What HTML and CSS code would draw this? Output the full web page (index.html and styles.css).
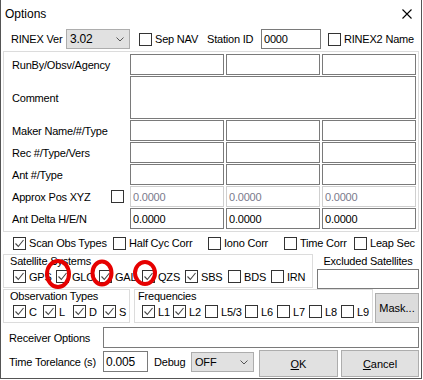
FILE: index.html
```html
<!DOCTYPE html>
<html lang="en">
<head>
  <meta charset="UTF-8">
  <title>Options</title>
  <link rel="stylesheet" href="styles.css">
</head>
<body>
  <div class="dialog">
    <div class="titlebar">
      <span class="title">Options</span>
      <svg class="close" width="10" height="10" viewBox="0 0 10 10"><path d="M0.5 0.5 L9.5 9.5 M9.5 0.5 L0.5 9.5" stroke="#000" stroke-width="1.1" fill="none"/></svg>
    </div>

    <div class="top-row">
      <span class="lbl rinex">RINEX Ver</span>
      <div class="select ver"><span>3.02</span><svg width="8" height="5" viewBox="0 0 8 5"><path d="M0.5 0.5 L4 4 L7.5 0.5" stroke="#555" fill="none"/></svg></div>
      <label class="chk sepnav"><span class="cb"></span>Sep NAV</label>
      <span class="lbl station-lbl">Station ID</span>
      <div class="field station">0000</div>
      <label class="chk rinex2"><span class="cb"></span>RINEX2 Name</label>
    </div>

    <div class="hdr-box">
      <div class="hrow">
        <span class="hlabel">RunBy/Obsv/Agency</span>
        <div class="fields"><div class="field"></div><div class="field"></div><div class="field"></div></div>
      </div>
      <div class="hrow tall">
        <span class="hlabel">Comment</span>
        <div class="field comment"></div>
      </div>
      <div class="hrow">
        <span class="hlabel">Maker Name/#/Type</span>
        <div class="fields"><div class="field"></div><div class="field"></div><div class="field"></div></div>
      </div>
      <div class="hrow">
        <span class="hlabel">Rec #/Type/Vers</span>
        <div class="fields"><div class="field"></div><div class="field"></div><div class="field"></div></div>
      </div>
      <div class="hrow">
        <span class="hlabel">Ant #/Type</span>
        <div class="fields"><div class="field"></div><div class="field"></div><div class="field"></div></div>
      </div>
      <div class="hrow">
        <span class="hlabel with-cb">Approx Pos XYZ <span class="cb"></span></span>
        <div class="fields"><div class="field off">0.0000</div><div class="field off">0.0000</div><div class="field off">0.0000</div></div>
      </div>
      <div class="hrow">
        <span class="hlabel">Ant Delta H/E/N</span>
        <div class="fields"><div class="field">0.0000</div><div class="field">0.0000</div><div class="field">0.0000</div></div>
      </div>
    </div>

    <div class="opts-row">
      <label class="chk"><span class="cb on"><svg viewBox="0 0 11 11"><path d="M1.5 5.5 L4.3 8.5 L9.5 2" stroke="#444" stroke-width="1.1" fill="none"/></svg></span>Scan Obs Types</label>
      <label class="chk"><span class="cb"></span>Half Cyc Corr</label>
      <label class="chk"><span class="cb"></span>Iono Corr</label>
      <label class="chk"><span class="cb"></span>Time Corr</label>
      <label class="chk"><span class="cb"></span>Leap Sec</label>
    </div>

    <div class="sat-row">
      <div class="group sat-box">
        <div class="group-title">Satellite Systems</div>
        <div class="checks sat-checks">
          <label class="chk"><span class="cb on"><svg viewBox="0 0 11 11"><path d="M1.5 5.5 L4.3 8.5 L9.5 2" stroke="#444" stroke-width="1.1" fill="none"/></svg></span>GPS</label>
          <label class="chk"><span class="cb on"><svg viewBox="0 0 11 11"><path d="M1.5 5.5 L4.3 8.5 L9.5 2" stroke="#444" stroke-width="1.1" fill="none"/></svg></span>GLO</label>
          <label class="chk"><span class="cb on"><svg viewBox="0 0 11 11"><path d="M1.5 5.5 L4.3 8.5 L9.5 2" stroke="#444" stroke-width="1.1" fill="none"/></svg></span>GAL</label>
          <label class="chk"><span class="cb on"><svg viewBox="0 0 11 11"><path d="M1.5 5.5 L4.3 8.5 L9.5 2" stroke="#444" stroke-width="1.1" fill="none"/></svg></span>QZS</label>
          <label class="chk"><span class="cb on"><svg viewBox="0 0 11 11"><path d="M1.5 5.5 L4.3 8.5 L9.5 2" stroke="#444" stroke-width="1.1" fill="none"/></svg></span>SBS</label>
          <label class="chk"><span class="cb"></span>BDS</label>
          <label class="chk"><span class="cb"></span>IRN</label>
        </div>
      </div>
      <div class="excl">
        <div class="excl-lbl">Excluded Satellites</div>
        <div class="field excl-field"></div>
      </div>
    </div>

    <div class="obs-row">
      <div class="group obs-box">
        <div class="group-title">Observation Types</div>
        <div class="checks obs-checks">
          <label class="chk"><span class="cb on"><svg viewBox="0 0 11 11"><path d="M1.5 5.5 L4.3 8.5 L9.5 2" stroke="#444" stroke-width="1.1" fill="none"/></svg></span>C</label>
          <label class="chk"><span class="cb on"><svg viewBox="0 0 11 11"><path d="M1.5 5.5 L4.3 8.5 L9.5 2" stroke="#444" stroke-width="1.1" fill="none"/></svg></span>L</label>
          <label class="chk"><span class="cb on"><svg viewBox="0 0 11 11"><path d="M1.5 5.5 L4.3 8.5 L9.5 2" stroke="#444" stroke-width="1.1" fill="none"/></svg></span>D</label>
          <label class="chk"><span class="cb on"><svg viewBox="0 0 11 11"><path d="M1.5 5.5 L4.3 8.5 L9.5 2" stroke="#444" stroke-width="1.1" fill="none"/></svg></span>S</label>
        </div>
      </div>
      <div class="group freq-box">
        <div class="group-title">Frequencies</div>
        <div class="checks freq-checks">
          <label class="chk"><span class="cb on"><svg viewBox="0 0 11 11"><path d="M1.5 5.5 L4.3 8.5 L9.5 2" stroke="#444" stroke-width="1.1" fill="none"/></svg></span>L1</label>
          <label class="chk"><span class="cb on"><svg viewBox="0 0 11 11"><path d="M1.5 5.5 L4.3 8.5 L9.5 2" stroke="#444" stroke-width="1.1" fill="none"/></svg></span>L2</label>
          <label class="chk"><span class="cb"></span>L5/3</label>
          <label class="chk"><span class="cb"></span>L6</label>
          <label class="chk"><span class="cb"></span>L7</label>
          <label class="chk"><span class="cb"></span>L8</label>
          <label class="chk"><span class="cb"></span>L9</label>
        </div>
      </div>
      <button class="btn mask">Mask...</button>
    </div>

    <div class="form-row receiver">
      <span class="form-lbl">Receiver Options</span>
      <div class="field recv-field"></div>
    </div>

    <div class="form-row bottom">
      <span class="form-lbl">Time Torelance (s)</span>
      <div class="field tol-field">0.005</div>
      <span class="debug-lbl">Debug</span>
      <div class="select debug"><span>OFF</span><svg width="8" height="5" viewBox="0 0 8 5"><path d="M0.5 0.5 L4 4 L7.5 0.5" stroke="#555" fill="none"/></svg></div>
      <button class="btn ok"><u>O</u>K</button>
      <button class="btn cancel"><u>C</u>ancel</button>
    </div>

    <!-- red marks drawn over the screenshot -->
    <svg class="marks" width="422" height="379" viewBox="0 0 422 379">
      <ellipse cx="58" cy="274" rx="11" ry="13" />
      <ellipse cx="102" cy="273" rx="9.5" ry="11.5" />
      <ellipse cx="145" cy="273" rx="10" ry="11" />
    </svg>
  </div>
</body>
</html>
```

FILE: styles.css
```css
* {
  margin: 0;
  padding: 0;
  box-sizing: border-box;
}

body {
  font-family: "Liberation Sans", Arial, sans-serif;
  font-size: 11px;
  letter-spacing: -0.2px;
  color: #000;
  background: #fff;
}

.dialog {
  position: relative;
  width: 422px;
  height: 379px;
  background: #fff;
  border: 1px solid #555;
  border-top: none;
}

/* title bar */
.titlebar {
  height: 27px;
  display: flex;
  align-items: center;
  justify-content: space-between;
  padding: 0 9px 0 4px;
}

.title {
  font-size: 12px;
  letter-spacing: 0;
}

.close {
  display: block;
}

/* generic controls */
.cb {
  width: 13px;
  height: 13px;
  border: 1px solid #333;
  background: #fff;
  flex-shrink: 0;
  display: flex;
}

.cb svg {
  width: 11px;
  height: 11px;
}

.chk {
  display: flex;
  align-items: center;
  gap: 3px;
  white-space: nowrap;
  height: 13px;
}

.field {
  height: 21px;
  border: 1px solid #7a7a7a;
  background: #fff;
  padding-left: 2px;
  display: flex;
  align-items: center;
  white-space: nowrap;
}

.field.off {
  border-color: #cfcfcf;
  color: #7a7a8c;
}

.select {
  height: 20px;
  background: #e1e1e1;
  border: 1px solid #adadad;
  display: flex;
  align-items: center;
  justify-content: space-between;
  padding: 0 5px 0 3px;
}

.btn {
  font: inherit;
  color: #000;
  background: #e1e1e1;
  border: 1px solid #adadad;
  display: flex;
  align-items: center;
  justify-content: center;
}

/* first row */
.top-row {
  height: 20px;
  margin-top: 2px;
  display: flex;
  align-items: center;
  padding-left: 10px;
}

.rinex {
  width: 55px;
}

.ver {
  width: 64px;
  font-size: 12px;
}

.sepnav {
  margin-left: 9px;
  width: 68px;
}

.station-lbl {
  width: 54px;
}

.station {
  width: 60px;
  height: 20px;
}

.rinex2 {
  margin-left: 7px;
}

/* header fields */
.hdr-box {
  width: 416px;
  margin: 2px 0 0 2px;
  border: 1px solid #dcdcdc;
  padding: 2px 2px 2px 0;
  display: flex;
  flex-direction: column;
  gap: 1px;
}

.hrow {
  display: flex;
  height: 21px;
}

.hrow.tall {
  height: 43px;
}

.hlabel {
  width: 126px;
  padding-left: 8px;
  display: flex;
  align-items: center;
}

.hlabel.with-cb {
  justify-content: space-between;
  padding-right: 6px;
}

.fields {
  display: flex;
  gap: 2px;
}

.fields .field {
  width: 94px;
}

.comment {
  width: 286px;
  height: 43px;
}

/* option checkboxes */
.opts-row {
  height: 22px;
  display: grid;
  grid-template-columns: 100px 95px 76px 70px auto;
  align-items: center;
  padding-left: 12px;
}

/* group boxes */
.group {
  border: 1px solid #dcdcdc;
  height: 34px;
  padding-bottom: 4px;
}

.group-title {
  height: 13px;
  line-height: 13px;
  padding-left: 6px;
}

.checks {
  display: grid;
  margin-top: 2px;
  padding-left: 9px;
}

.sat-row {
  display: flex;
  padding-left: 2px;
}

.sat-box {
  width: 310px;
}

.sat-checks {
  grid-template-columns: repeat(7, 43px);
}

.excl {
  margin-left: 4px;
  width: 102px;
}

.excl-lbl {
  height: 15px;
  line-height: 15px;
  text-align: center;
}

.excl-field {
  height: 20px;
}

.obs-row {
  display: flex;
  align-items: flex-start;
  padding-left: 2px;
}

.obs-box {
  width: 127px;
}

.obs-checks {
  grid-template-columns: repeat(4, 30px);
}

.freq-box {
  margin-left: 4px;
  width: 239px;
}

.freq-box .group-title {
  padding-left: 3px;
}

.freq-checks {
  padding-left: 7px;
  grid-template-columns: 31px 32px 40px 32px 32px 32px auto;
}

.mask {
  margin: 4px 0 0 2px;
  width: 44px;
  height: 30px;
  background: #dcdcdc;
}

/* bottom rows */
.form-row {
  display: flex;
  align-items: flex-start;
  padding-left: 8px;
}

.receiver {
  margin-top: 4px;
  align-items: center;
}

.form-lbl {
  width: 94px;
  height: 21px;
  display: flex;
  align-items: center;
}

.bottom .form-lbl {
  margin-top: 1px;
}

.recv-field {
  width: 316px;
}

.bottom {
  margin-top: 2px;
}

.tol-field {
  width: 45px;
  margin-top: 1px;
  font-size: 12px;
}

.debug-lbl {
  margin: 1px 0 0 6px;
  width: 37px;
  height: 21px;
  display: flex;
  align-items: center;
}

.debug {
  margin-top: 2px;
  width: 63px;
}

.ok {
  margin-left: 5px;
  width: 79px;
  height: 27px;
}

.cancel {
  margin-left: 3px;
  width: 78px;
  height: 27px;
}

/* annotation circles */
.marks {
  position: absolute;
  top: 0;
  left: -1px;
  pointer-events: none;
}

.marks ellipse {
  fill: none;
  stroke: #e60000;
  stroke-width: 4;
}
```
